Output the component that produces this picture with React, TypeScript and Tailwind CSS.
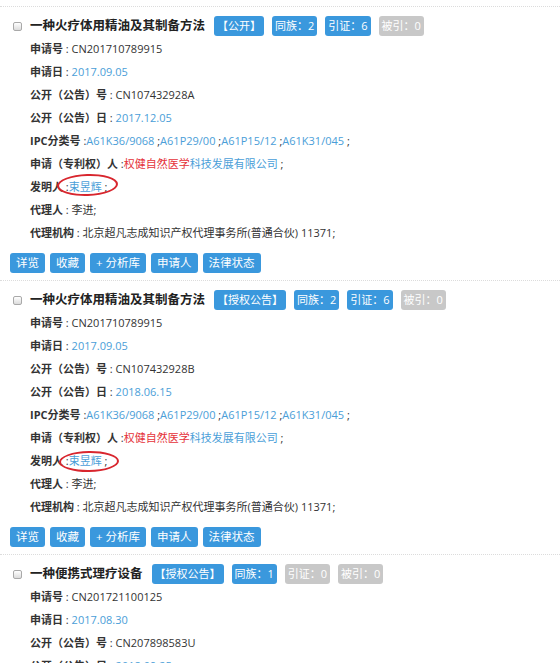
import React from "react"

type Tag = { text: string; on: boolean }
type Row = { label: string; value: React.ReactNode; mark?: string }
type Patent = { title: string; tags: Tag[]; rows: Row[]; actions: boolean }

const Link = ({ children }: { children: React.ReactNode }) => (
  <span className="text-[#4a9ed8]">{children}</span>
)

const ipc = (
  <>
    {" "}:<Link>A61K36/9068</Link> ;<Link>A61P29/00</Link> ;<Link>A61P15/12</Link> ;<Link>A61K31/045</Link> ;
  </>
)

const applicant = (
  <>
    {" "}:<span className="text-[#e5323a]">权健自然医学</span>
    <Link>科技发展有限公司</Link> ;
  </>
)

const inventor = (
  <>
    {" "}:<Link>束昱辉</Link> ;
  </>
)

const patents: Patent[] = [
  {
    title: "一种火疗体用精油及其制备方法",
    tags: [
      { text: "【公开】", on: true },
      { text: "同族：2", on: true },
      { text: "引证：6", on: true },
      { text: "被引：0", on: false },
    ],
    rows: [
      { label: "申请号", value: <> : CN201710789915</> },
      { label: "申请日", value: <> : <Link>2017.09.05</Link></> },
      { label: "公开（公告）号", value: <> : CN107432928A</> },
      { label: "公开（公告）日", value: <> : <Link>2017.12.05</Link></> },
      { label: "IPC分类号", value: ipc },
      { label: "申请（专利权）人", value: applicant },
      { label: "发明人", value: inventor, mark: "left-[57px] top-[-1px] w-[61px] h-[22px] -rotate-2" },
      { label: "代理人", value: <> : 李进;</> },
      { label: "代理机构", value: <> : 北京超凡志成知识产权代理事务所(普通合伙) 11371;</> },
    ],
    actions: true,
  },
  {
    title: "一种火疗体用精油及其制备方法",
    tags: [
      { text: "【授权公告】", on: true },
      { text: "同族：2", on: true },
      { text: "引证：6", on: true },
      { text: "被引：0", on: false },
    ],
    rows: [
      { label: "申请号", value: <> : CN201710789915</> },
      { label: "申请日", value: <> : <Link>2017.09.05</Link></> },
      { label: "公开（公告）号", value: <> : CN107432928B</> },
      { label: "公开（公告）日", value: <> : <Link>2018.06.15</Link></> },
      { label: "IPC分类号", value: ipc },
      { label: "申请（专利权）人", value: applicant },
      { label: "发明人", value: inventor, mark: "left-[59px] top-[2px] w-[60px] h-[21px] -rotate-1" },
      { label: "代理人", value: <> : 李进;</> },
      { label: "代理机构", value: <> : 北京超凡志成知识产权代理事务所(普通合伙) 11371;</> },
    ],
    actions: true,
  },
  {
    title: "一种便携式理疗设备",
    tags: [
      { text: "【授权公告】", on: true },
      { text: "同族：1", on: true },
      { text: "引证：0", on: false },
      { text: "被引：0", on: false },
    ],
    rows: [
      { label: "申请号", value: <> : CN201721100125</> },
      { label: "申请日", value: <> : <Link>2017.08.30</Link></> },
      { label: "公开（公告）号", value: <> : CN207898583U</> },
      { label: "公开（公告）日", value: <> : <Link>2018.09.25</Link></> },
    ],
    actions: false,
  },
]

const actions = ["详览", "收藏", "+ 分析库", "申请人", "法律状态"]

const PatentCard = ({ p }: { p: Patent }) => (
  <div className="border-t border-dotted border-[#dcdcdc] pt-[8px] pb-[7px]">
    <div className="flex items-center h-[22px]">
      <div className="ml-[13px] mr-[8px] w-[9px] h-[9px] rounded-[2px] border border-[#a9a9a9] bg-gradient-to-b from-white to-[#dcdcdc]" />
      <div className="text-[12.5px] font-bold text-[#222]">{p.title}</div>
      <div className="flex gap-[8px] ml-[9px]">
        {p.tags.map((t, i) => (
          <span
            key={i}
            className={`h-[20px] leading-[20px] px-[3px] rounded-[3px] text-[11px] text-white ${t.on ? "bg-[#3a98dd]" : "bg-[#c8c8c8]"}`}
          >
            {t.text}
          </span>
        ))}
      </div>
    </div>
    {p.rows.map((r, i) => (
      <div key={i} className="relative h-[23px] leading-[23px] pl-[30px] text-[11px] text-[#333] whitespace-nowrap">
        <span className="font-bold">{r.label}</span>
        {r.value}
        {r.mark && (
          <span className={`absolute rounded-[50%] border-2 border-[#d8262e] ${r.mark}`} />
        )}
      </div>
    ))}
    {p.actions && (
      <div className="flex gap-[5px] pl-[10px] mt-[9px]">
        {actions.map((a) => (
          <button
            key={a}
            className="h-[20px] leading-[20px] px-[6px] rounded-[3px] bg-[#3a98dd] text-white text-[11.5px]"
          >
            {a}
          </button>
        ))}
      </div>
    )}
  </div>
)

export default function App() {
  return (
    <div
      className="w-[560px] h-[663px] overflow-hidden bg-white pt-[6px]"
      style={{ fontFamily: '"Open Sans", "Noto Sans CJK SC", sans-serif' }}
    >
      {patents.map((p, i) => (
        <PatentCard key={i} p={p} />
      ))}
    </div>
  )
}
